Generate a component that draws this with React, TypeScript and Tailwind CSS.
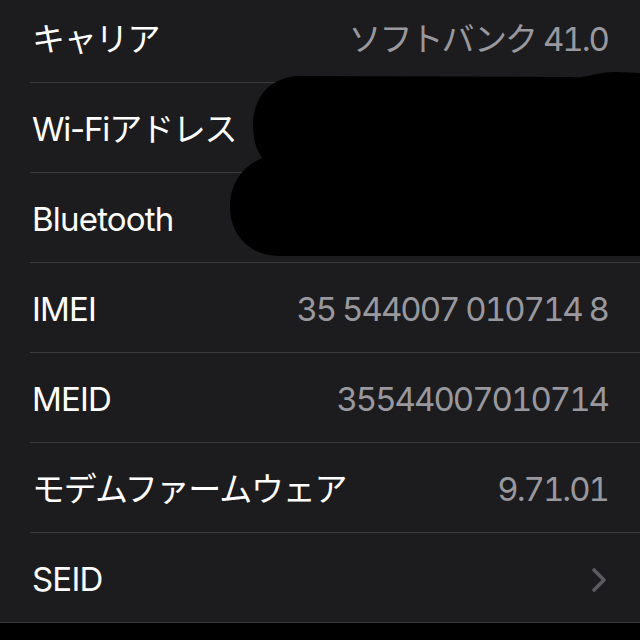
import React from 'react';

const rows: { label: string; value?: string; chevron?: boolean; tight?: boolean }[] = [
  { label: 'キャリア', value: 'ソフトバンク 41.0', tight: true },
  { label: 'Wi-Fiアドレス', tight: true },
  { label: 'Bluetooth' },
  { label: 'IMEI', value: '35 544007 010714 8' },
  { label: 'MEID', value: '35544007010714' },
  { label: 'モデムファームウェア', value: '9.71.01', tight: true },
  { label: 'SEID', chevron: true },
];

const App: React.FC = () => {
  return (
    <div
      className="relative w-[640px] h-[640px] overflow-hidden bg-black"
      style={{ fontFamily: 'Inter, "Noto Sans CJK JP", sans-serif' }}
    >
      <div className="bg-[#1c1c1e] mt-[-7px]">
        {rows.map((r, i) => (
          <div key={r.label} className={i === rows.length - 1 ? 'pl-0' : 'pl-[30px]'}>
            <div
              className={`h-[89px] pt-[5px] flex items-center justify-between pr-[32px] ${
                i === rows.length - 1 ? 'pl-[30px]' : ''
              }`}
            >
              <span
                className={`text-[33px] text-white pl-[2px] ${r.tight ? 'tracking-[-1.2px]' : 'tracking-[-0.8px]'}`}
              >
                {r.label}
              </span>
              {r.value && (
                <span className="text-[33px] text-[#98989e] tracking-[-2px] tabular-nums">{r.value}</span>
              )}
              {r.chevron && (
                <svg width="16" height="26" viewBox="0 0 16 26" className="mr-[1px]">
                  <path
                    d="M3 3 L13 13 L3 23"
                    fill="none"
                    stroke="#5b5b60"
                    strokeWidth="3.6"
                    strokeLinecap="round"
                    strokeLinejoin="round"
                  />
                </svg>
              )}
            </div>
            <div className="h-px bg-[#3a3a3c]" />
          </div>
        ))}
      </div>

      {/* redaction scribble */}
      <svg className="absolute left-0 top-0" width="640" height="640" viewBox="0 0 640 640">
        <path
          d="M300 76 L570 77 C585 79 595 72 615 72 L640 73 L640 256 L280 256 C250 256 230 235 230 207 C230 182 244 166 262 158 C256 150 253 138 253 125 C253 96 272 76 300 76 Z"
          fill="#000"
        />
      </svg>
    </div>
  );
};

export default App;
